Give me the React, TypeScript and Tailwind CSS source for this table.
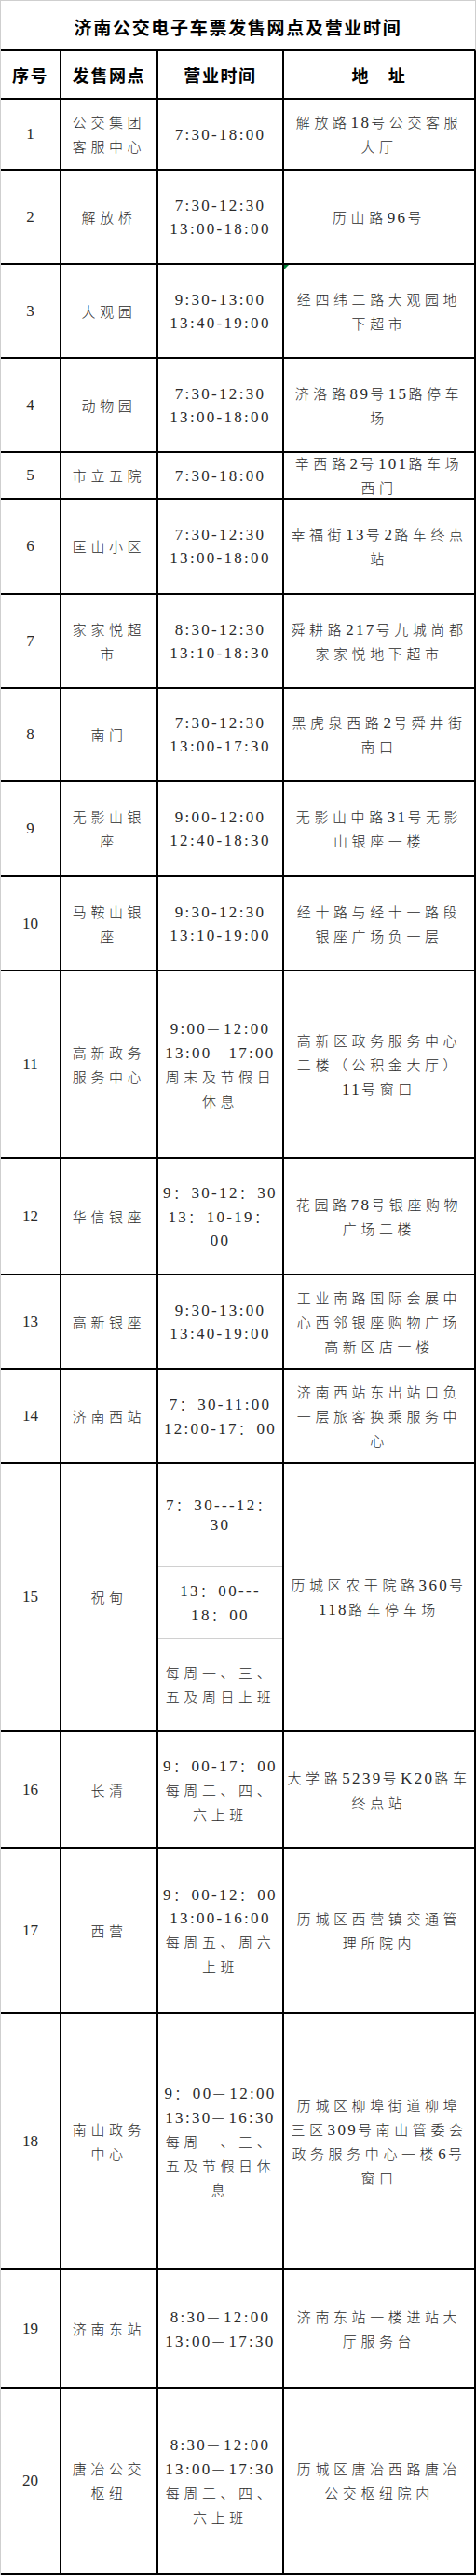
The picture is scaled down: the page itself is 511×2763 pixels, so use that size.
import React from "react";

type Row = {
  n: string;
  name: string[];
  time: string[] | string[][];
  addr: string[];
  h: string;
  flag?: boolean;
};

// 济南公交电子车票发售网点 - rows copied line by line so the wraps match
const rows: Row[] = [
  { n: "1", name: ["公交集团", "客服中心"], time: ["7:30-18:00"], addr: ["解放路18号公交客服", "大厅"], h: "h-[76px]" },
  { n: "2", name: ["解放桥"], time: ["7:30-12:30", "13:00-18:00"], addr: ["历山路96号"], h: "h-[101px]" },
  { n: "3", name: ["大观园"], time: ["9:30-13:00", "13:40-19:00"], addr: ["经四纬二路大观园地", "下超市"], h: "h-[101px]", flag: true },
  { n: "4", name: ["动物园"], time: ["7:30-12:30", "13:00-18:00"], addr: ["济洛路89号15路停车", "场"], h: "h-[101px]" },
  { n: "5", name: ["市立五院"], time: ["7:30-18:00"], addr: ["辛西路2号101路车场", "西门"], h: "h-[50px]" },
  { n: "6", name: ["匡山小区"], time: ["7:30-12:30", "13:00-18:00"], addr: ["幸福街13号2路车终点", "站"], h: "h-[102px]" },
  { n: "7", name: ["家家悦超", "市"], time: ["8:30-12:30", "13:10-18:30"], addr: ["舜耕路217号九城尚都", "家家悦地下超市"], h: "h-[101px]" },
  { n: "8", name: ["南门"], time: ["7:30-12:30", "13:00-17:30"], addr: ["黑虎泉西路2号舜井街", "南口"], h: "h-[100px]" },
  { n: "9", name: ["无影山银", "座"], time: ["9:00-12:00", "12:40-18:30"], addr: ["无影山中路31号无影", "山银座一楼"], h: "h-[102px]" },
  { n: "10", name: ["马鞍山银", "座"], time: ["9:30-12:30", "13:10-19:00"], addr: ["经十路与经十一路段", "银座广场负一层"], h: "h-[101px]" },
  {
    n: "11",
    name: ["高新政务", "服务中心"],
    time: ["9:00—12:00", "13:00—17:00", "周末及节假日", "休息"],
    addr: ["高新区政务服务中心", "二楼（公积金大厅）", "11号窗口"],
    h: "h-[201px]",
  },
  { n: "12", name: ["华信银座"], time: ["9：30-12：30", "13：10-19：", "00"], addr: ["花园路78号银座购物", "广场二楼"], h: "h-[125px]" },
  {
    n: "13",
    name: ["高新银座"],
    time: ["9:30-13:00", "13:40-19:00"],
    addr: ["工业南路国际会展中", "心西邻银座购物广场", "高新区店一楼"],
    h: "h-[101px]",
  },
  {
    n: "14",
    name: ["济南西站"],
    time: ["7：30-11:00", "12:00-17：00"],
    addr: ["济南西站东出站口负", "一层旅客换乘服务中", "心"],
    h: "h-[101px]",
  },
  {
    n: "15",
    name: ["祝甸"],
    time: [["7：30---12：", "30"], ["13：00---", "18：00"], ["每周一、三、", "五及周日上班"]],
    addr: ["历城区农干院路360号", "118路车停车场"],
    h: "h-[288px]",
  },
  { n: "16", name: ["长清"], time: ["9：00-17：00", "每周二、四、", "六上班"], addr: ["大学路5239号K20路车", "终点站"], h: "h-[125px]" },
  {
    n: "17",
    name: ["西营"],
    time: ["9：00-12：00", "13:00-16:00", "每周五、周六", "上班"],
    addr: ["历城区西营镇交通管", "理所院内"],
    h: "h-[177px]",
  },
  {
    n: "18",
    name: ["南山政务", "中心"],
    time: ["9：00—12:00", "13:30—16:30", "每周一、三、", "五及节假日休", "息"],
    addr: ["历城区柳埠街道柳埠", "三区309号南山管委会", "政务服务中心一楼6号", "窗口"],
    h: "h-[275px]",
  },
  { n: "19", name: ["济南东站"], time: ["8:30—12:00", "13:00—17:30"], addr: ["济南东站一楼进站大", "厅服务台"], h: "h-[127px]" },
  {
    n: "20",
    name: ["唐冶公交", "枢纽"],
    time: ["8:30—12:00", "13:00—17:30", "每周二、四、", "六上班"],
    addr: ["历城区唐冶西路唐冶", "公交枢纽院内"],
    h: "h-[200px]",
  },
];

// split a line into latin / cjk runs, they need different size and spacing
function Txt({ s }: { s: string }) {
  const parts = s.split(/([\x00-\x7F]+)/).filter((p) => p.length > 0);
  return (
    <>
      {parts.map((p, i) =>
        /^[\x00-\x7F]+$/.test(p) ? (
          <span key={i} className="font-['Liberation_Serif',serif] text-[17px] tracking-[2.3px]">
            {p}
          </span>
        ) : (
          <span key={i} className="font-['Noto_Sans_CJK_SC',sans-serif] text-[15px] font-light tracking-[4.6px]">
            {p}
          </span>
        )
      )}
    </>
  );
}

function Lines({ lines, lead = "leading-[25px]" }: { lines: string[]; lead?: string }) {
  return (
    <>
      {lines.map((l, i) => (
        <div key={i} className={`whitespace-nowrap ${lead}`}>
          <Txt s={l} />
        </div>
      ))}
    </>
  );
}

const cell = "flex flex-col items-center justify-center text-center border-r-2 border-black";

export default function App() {
  return (
    <div className="w-[511px] bg-white text-[#2a2a2a]">
      <div className="border-l border-[#cfcfcf]">
        {/* Title */}
        <div className="h-[55px] flex items-center justify-center pt-1 border-t border-r border-[#cfcfcf] border-b-2 border-b-black">
          <span className="font-['Noto_Sans_CJK_SC',sans-serif] text-[19px] font-bold tracking-[1.7px] text-black">
            济南公交电子车票发售网点及营业时间
          </span>
        </div>

        {/* Header */}
        <div className="h-[52px] flex border-b-2 border-black font-['Noto_Sans_CJK_SC',sans-serif] text-[18px] font-bold text-black">
          <div className={`${cell} w-[65px] tracking-[1.6px]`}>序号</div>
          <div className={`${cell} w-[104px] tracking-[1.6px]`}>发售网点</div>
          <div className={`${cell} w-[135px] tracking-[1.6px]`}>营业时间</div>
          <div className={`${cell} flex-1 tracking-[1.6px]`}>地　址</div>
        </div>

        {rows.map((r) => (
          <div key={r.n} className={`${r.h} flex border-b-2 border-black`}>
            <div className={`${cell} w-[65px]`}>
              <span className="font-['Liberation_Serif',serif] text-[17px]">{r.n}</span>
            </div>
            <div className={`${cell} w-[104px]`}>
              <Lines lines={r.name} />
            </div>
            {Array.isArray(r.time[0]) ? (
              <div className="w-[135px] flex flex-col border-r-2 border-black text-center">
                <div className="h-[111px] flex flex-col items-center justify-center border-b border-[#d0d0d0]">
                  <Lines lines={(r.time as string[][])[0]} lead="leading-[20px]" />
                </div>
                <div className="h-[77px] flex flex-col items-center justify-center border-b border-[#d0d0d0]">
                  <Lines lines={(r.time as string[][])[1]} />
                </div>
                <div className="flex-1 flex flex-col items-center justify-center">
                  <Lines lines={(r.time as string[][])[2]} />
                </div>
              </div>
            ) : (
              <div className={`${cell} w-[135px]`}>
                <Lines lines={r.time as string[]} />
              </div>
            )}
            <div className={`${cell} flex-1 relative`}>
              {r.flag && (
                <div className="absolute top-0 left-0 w-0 h-0 border-t-[5px] border-r-[5px] border-t-green-700 border-r-transparent" />
              )}
              <Lines lines={r.addr} />
            </div>
          </div>
        ))}
      </div>
    </div>
  );
}
